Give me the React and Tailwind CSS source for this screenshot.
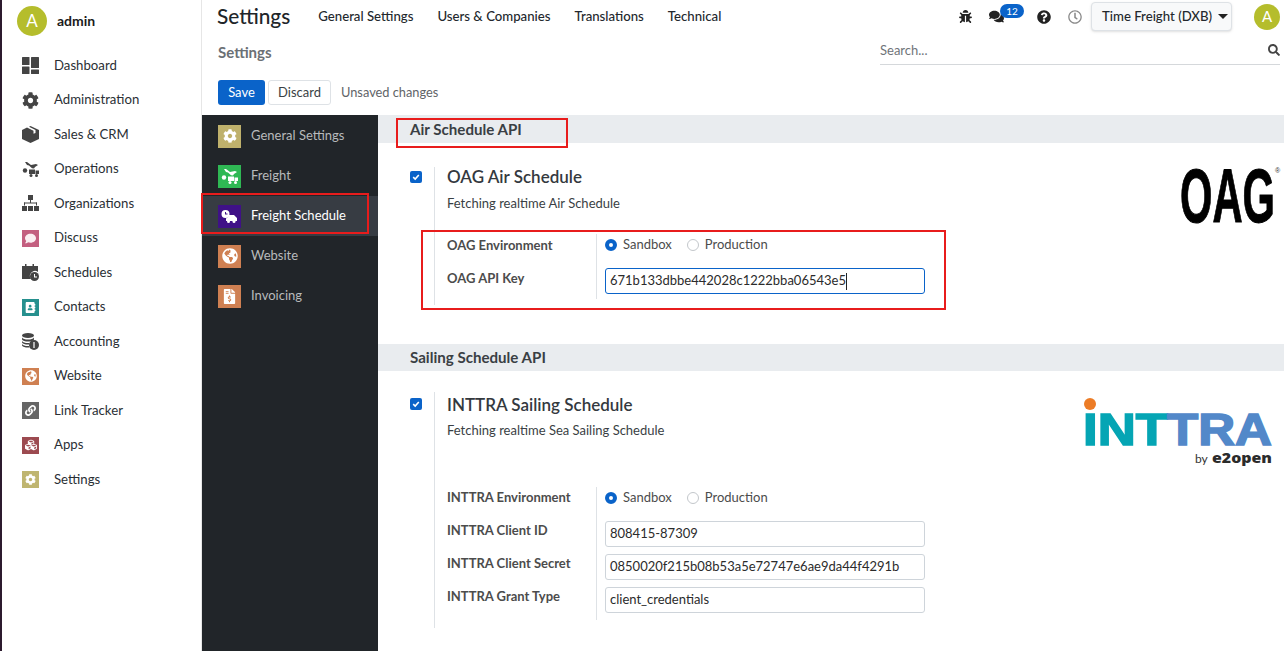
import {
  FaBug,
  FaComments,
  FaQuestionCircle,
  FaRegClock,
  FaSearch,
  FaCog,
  FaComment,
  FaAddressBook,
  FaGlobeAmericas,
  FaLink,
  FaCubes,
  FaFileInvoiceDollar,
} from "react-icons/fa";

const Tile = ({ bg, children }) => (
  <div className={`w-[17px] h-[17px] flex items-center justify-center shrink-0 ${bg}`}>{children}</div>
);

const menuIcons = {
  dashboard: (
    <svg width="17" height="17" viewBox="0 0 17 17" fill="#444">
      <rect x="0" y="0" width="7.500" height="8" rx="0.500" />
      <rect x="9" y="0" width="8" height="11" rx="0.500" />
      <rect x="0" y="9.500" width="7.500" height="7.500" rx="0.500" />
      <rect x="9" y="12.500" width="8" height="4.500" rx="0.500" />
    </svg>
  ),
  gear: <FaCog size={17} color="#444" />,
  box: (
    <svg width="17" height="17" viewBox="0 0 17 17" fill="#444">
      <path d="M8.500 0 17 4v9l-8.500 4L0 13V4l5-2.400 6.500 3.200v3l2-.9V4L7 .8z" />
    </svg>
  ),
  ops: (
    <svg width="17" height="17" viewBox="0 0 17 17" fill="#444">
      <path d="M3 1h2l4 3 5-1 2 1-3 2-1 1.500-2-.2L7 4.500 5 4z" />
      <circle cx="3" cy="9.500" r="2.200" />
      <path d="M7 8.500h6V13H7zM13.500 9.500H17V13h-3.500z" />
      <circle cx="9" cy="14.500" r="1.500" />
      <circle cx="14.500" cy="14.500" r="1.500" />
    </svg>
  ),
  org: (
    <svg width="17" height="17" viewBox="0 0 17 17" fill="#444">
      <rect x="6" y="0" width="5" height="5" />
      <rect x="8" y="5" width="1" height="3" />
      <rect x="2" y="7.500" width="13" height="1" />
      <rect x="2" y="7.500" width="1" height="3" />
      <rect x="14" y="7.500" width="1" height="3" />
      <rect x="0" y="11" width="5" height="5" />
      <rect x="6" y="11" width="5" height="5" />
      <rect x="12" y="11" width="5" height="5" />
    </svg>
  ),
  discuss: (
    <Tile bg="bg-[#c45f80]">
      <FaComment size={11} color="#fbeef2" />
    </Tile>
  ),
  schedules: (
    <svg width="17" height="17" viewBox="0 0 17 17" fill="#444">
      <path d="M0 2h3V0h1.500v2h6V0H12v2h4v6a5 5 0 0 0-7 7H0z" />
      <circle cx="12.500" cy="12.500" r="4.500" />
      <path d="M12 10h1v2.500h2v1h-3z" fill="#fff" />
    </svg>
  ),
  contacts: (
    <Tile bg="bg-[#26908e]">
      <FaAddressBook size={11} color="#fff" />
    </Tile>
  ),
  accounting: (
    <svg width="17" height="17" viewBox="0 0 17 17" fill="#444">
      <ellipse cx="6" cy="2.500" rx="6" ry="2.500" />
      <path d="M0 4.500c1 1.500 3 2 6 2s5-.5 6-2v2c-1 1.500-3 2-6 2s-5-.5-6-2zM0 8c1 1.500 3 2 6 2h1.500L7 11.500H6c-3 0-5-.5-6-2zM0 11c1 1.500 3 2 6 2h1l.5 1.500H6c-3 0-5-.5-6-2z" />
      <circle cx="12" cy="12" r="5" />
      <rect x="11.400" y="9" width="1.200" height="6" fill="#fff" />
    </svg>
  ),
  website: (
    <Tile bg="bg-[#cf8052]">
      <FaGlobeAmericas size={12} color="#fff" />
    </Tile>
  ),
  link: (
    <Tile bg="bg-[#656565]">
      <FaLink size={11} color="#fff" />
    </Tile>
  ),
  apps: (
    <Tile bg="bg-[#9c4a50]">
      <FaCubes size={12} color="#fff" />
    </Tile>
  ),
  settings: (
    <Tile bg="bg-[#bfb570]">
      <FaCog size={11} color="#fff" />
    </Tile>
  ),
};

const menu = [
  ["Dashboard", "dashboard"],
  ["Administration", "gear"],
  ["Sales & CRM", "box"],
  ["Operations", "ops"],
  ["Organizations", "org"],
  ["Discuss", "discuss"],
  ["Schedules", "schedules"],
  ["Contacts", "contacts"],
  ["Accounting", "accounting"],
  ["Website", "website"],
  ["Link Tracker", "link"],
  ["Apps", "apps"],
  ["Settings", "settings"],
];

const AppTile = ({ bg, children }) => (
  <div className={`w-[23px] h-[23px] flex items-center justify-center shrink-0 ${bg}`}>{children}</div>
);

const settingsMenu = [
  {
    label: "General Settings",
    icon: (
      <AppTile bg="bg-[#bfb16c]">
        <FaCog size={14} color="#fff" />
      </AppTile>
    ),
  },
  {
    label: "Freight",
    icon: (
      <AppTile bg="bg-[#2fb854]">
        <svg width="17" height="17" viewBox="0 0 17 17" fill="#fff">
          <path d="M3 1h2l4 3 5-1 2 1-3 2-1 1.500-2-.2L7 4.500 5 4z" />
          <circle cx="3" cy="9.500" r="2.200" />
          <path d="M7 8.500h6V13H7zM13.500 9.500H17V13h-3.500z" />
          <circle cx="9" cy="14.500" r="1.500" />
          <circle cx="14.500" cy="14.500" r="1.500" />
        </svg>
      </AppTile>
    ),
  },
  {
    label: "Freight Schedule",
    active: true,
    icon: (
      <AppTile bg="bg-[#3f1187]">
        <svg width="17" height="17" viewBox="0 0 17 17" fill="#fff">
          <path
            fillRule="evenodd"
            d="M4.500 2a4 4 0 1 1 0 8 4 4 0 0 1 0-8zM4 4v2.500h2.500v-1H5V4z"
          />
          <path d="M8 7h5l3 3v3H5v-2.500A5 5 0 0 0 8 7z" />
          <circle cx="7.500" cy="13.500" r="1.500" />
          <circle cx="13" cy="13.500" r="1.500" />
        </svg>
      </AppTile>
    ),
  },
  {
    label: "Website",
    icon: (
      <AppTile bg="bg-[#cf8052]">
        <FaGlobeAmericas size={16} color="#fff" />
      </AppTile>
    ),
  },
  {
    label: "Invoicing",
    icon: (
      <AppTile bg="bg-[#cf8052]">
        <FaFileInvoiceDollar size={15} color="#fff" />
      </AppTile>
    ),
  },
];

const Checkbox = () => (
  <div className="w-3 h-3 rounded-[2px] bg-[#0a63c9] flex items-center justify-center shrink-0">
    <svg width="8" height="8" viewBox="0 0 8 8" fill="none" stroke="#fff" strokeWidth="1.600">
      <path d="M1.200 4.200 3.200 6 6.800 2" />
    </svg>
  </div>
);

const Radios = () => (
  <div className="flex items-center h-[20px] mt-px text-[13px] text-[#4c4c4c]">
    <span className="w-3 h-3 rounded-full border-[4px] border-[#0a63c9] bg-white mr-[6px]" />
    <span>Sandbox</span>
    <span className="w-3 h-3 rounded-full border border-[#c3c7cb] bg-white ml-[15px] mr-[6px]" />
    <span>Production</span>
  </div>
);

const TextBox = ({ value, focused }) => (
  <div
    className={`w-[320px] h-[26px] rounded-[3px] border bg-white px-[4px] flex items-center text-[13px] text-[#2b2b2b] ${
      focused ? "border-[#0a63c9]" : "border-[#ced4da]"
    }`}
  >
    {value}
    {focused && <span className="w-px h-[17px] bg-[#222]" />}
  </div>
);

const SectionBar = ({ children, className = "h-[27px]" }) => (
  <div className={`bg-[#e9ecef] pl-[32px] flex items-center text-[15.100px] font-bold text-[#3a3f44] ${className}`}>
    {children}
  </div>
);

const Annotation = ({ className }) => (
  <div className={`absolute border-2 border-[#e81c1c] pointer-events-none ${className}`} />
);

const OagLogo = () => (
  <svg width="104" height="64" viewBox="0 0 104 64" className="absolute left-[800px] top-[21px]">
    <text
      x="2"
      y="58"
      textLength="95"
      lengthAdjust="spacingAndGlyphs"
      fontFamily="'Liberation Sans', sans-serif"
      fontWeight="700"
      fontSize="76"
      fill="#000"
      stroke="#000"
      strokeWidth="1"
    >
      OAG
    </text>
    <text x="97" y="9" fontSize="7" fontFamily="'Liberation Sans', sans-serif" fill="#333">
      ®
    </text>
  </svg>
);

const InttraLogo = () => (
  <svg width="200" height="70" viewBox="0 0 200 70" className="absolute left-[704px] top-[26px]">
    <circle cx="8" cy="7" r="6" fill="#ec7c26" />
    <text
      x="1"
      y="48"
      textLength="85"
      lengthAdjust="spacingAndGlyphs"
      fontFamily="'Liberation Sans', sans-serif"
      fontWeight="700"
      fontSize="44"
      fill="#05a5b4"
      stroke="#05a5b4"
      strokeWidth="1.500"
    >
      INT
    </text>
    <text
      x="85"
      y="48"
      textLength="105"
      lengthAdjust="spacingAndGlyphs"
      fontFamily="'Liberation Sans', sans-serif"
      fontWeight="700"
      fontSize="44"
      fill="#5288c9"
      stroke="#5288c9"
      strokeWidth="1.500"
    >
      TRA
    </text>
    <text x="113" y="66" fontSize="12" fontFamily="Lato, sans-serif" fill="#333">
      by
    </text>
    <text
      x="130"
      y="66"
      fontSize="14"
      fontWeight="800"
      textLength="60"
      lengthAdjust="spacingAndGlyphs"
      fontFamily="'Open Sans', sans-serif"
      fill="#2b2b2b"
    >
      e2open
    </text>
  </svg>
);

const Label = ({ children }) => (
  <div className="h-[33px] flex items-start text-[13px] font-bold text-[#4c4c4c]">{children}</div>
);

export default function App() {
  return (
    <div className="relative w-[1284px] h-[651px] overflow-hidden flex bg-white font-['Lato',sans-serif] text-[#212529]">
      <div className="w-[2px] bg-[#2c1a2e] shrink-0" />

      {/* app sidebar */}
      <aside className="w-[200px] shrink-0 border-r border-[#e6e6e6] bg-white">
        <div className="flex items-start pl-[15px] pt-[6px] h-[48.500px]">
          <div className="w-[30px] h-[30px] rounded-full bg-[#b5bd2c] text-white flex items-center justify-center text-[17px]">
            A
          </div>
          <span className="ml-[10px] leading-[30px] text-[14px] font-bold text-[#1b1b1b]">admin</span>
        </div>
        <nav>
          {menu.map(([label, icon]) => (
            <div key={label} className="h-[34.500px] flex items-center pl-[20px] text-[13.200px] text-[#2a2f35]">
              <span className="w-[17px] h-[17px] flex items-center justify-center shrink-0">{menuIcons[icon]}</span>
              <span className="ml-[15px]">{label}</span>
            </div>
          ))}
        </nav>
      </aside>

      <main className="flex-1 flex flex-col min-w-0">
        {/* top bar */}
        <header className="h-[115px] shrink-0 pl-[15px] pr-[4px]">
          <div className="h-[33px] flex items-center">
            <span className="text-[20.800px] font-medium text-[#212529] leading-none">Settings</span>
            <div className="ml-[28px] flex gap-[24px] text-[13.200px] font-medium text-[#23282d]">
              <span>General Settings</span>
              <span>Users &amp; Companies</span>
              <span>Translations</span>
              <span>Technical</span>
            </div>
            <div className="ml-auto flex items-center text-[#222]">
              <FaBug size={13} />
              <span className="relative ml-[17px] w-[15px]">
                <FaComments size={15} />
                <span className="absolute -top-[5px] left-[11px] w-[24px] h-[14px] rounded-full bg-[#0a63c9] text-white text-[10px] flex items-center justify-center">
                  12
                </span>
              </span>
              <span className="ml-[33px]">
                <FaQuestionCircle size={14} />
              </span>
              <span className="ml-[17px] text-[#8a8a8a]">
                <FaRegClock size={14} />
              </span>
              <div className="ml-[9px] h-[29px] w-[141px] rounded-[4px] border border-[#dee2e6] bg-[#f8f9fa] shadow-sm flex items-center justify-between pl-[10px] pr-[3px] text-[13.200px] font-medium text-[#23282d]">
                <span>Time Freight (DXB)</span>
                <span className="w-0 h-0 border-x-[5px] border-x-transparent border-t-[5px] border-t-[#222]" />
              </div>
              <div className="ml-[22px] w-[26px] h-[26px] rounded-full bg-[#b5bd2c] text-white flex items-center justify-center text-[15px]">
                A
              </div>
            </div>
          </div>
          <div className="flex items-start h-[47px] pt-[8px] ml-px">
            <span className="text-[15px] font-bold text-[#6b7075]">Settings</span>
            <div className="ml-auto w-[400px] h-[24px] border-b border-[#d5d8db] flex items-start justify-between text-[13px] text-[#6f7479]">
              <span className="leading-[19px]">Search...</span>
              <FaSearch size={12} className="text-[#444] mt-[3px]" />
            </div>
          </div>
          <div className="flex items-center ml-px">
            <button className="h-[25px] w-[47px] rounded-[3px] bg-[#0a63c9] text-white text-[13px]">Save</button>
            <button className="ml-[3px] h-[25px] w-[63px] rounded-[3px] border border-[#dee2e6] bg-white text-[13px] text-[#3a3f44]">
              Discard
            </button>
            <span className="ml-[10px] text-[12.800px] text-[#5f6468]">Unsaved changes</span>
          </div>
        </header>

        <div className="flex-1 flex min-h-0">
          {/* settings tabs */}
          <div className="w-[176px] shrink-0 bg-[#212529] pt-px">
            {settingsMenu.map((item) => (
              <div
                key={item.label}
                className={`h-[40px] flex items-center pl-[16px] text-[13px] ${
                  item.active ? "bg-[#373c43] text-white" : "text-[#b8babc]"
                }`}
              >
                {item.icon}
                <span className="ml-[10px]">{item.label}</span>
              </div>
            ))}
          </div>

          {/* settings content */}
          <div className="flex-1 min-w-0 relative">
            <SectionBar className="h-[28px]">Air Schedule API</SectionBar>
            <div className="relative h-[201px] pt-[24px] pl-[32px] flex items-start">
              <div className="pt-[4px]">
                <Checkbox />
              </div>
              <div className="ml-[12px] h-[138px] border-l border-[#dee2e6] pl-[12px]">
                <div className="text-[17px] font-semibold leading-[20px] text-[#34393e]">OAG Air Schedule</div>
                <div className="mt-[7px] text-[13px] leading-[18px] text-[#3a3f44]">Fetching realtime Air Schedule</div>
                <div className="mt-[22px] flex">
                  <div className="w-[149px] pt-[2px]">
                    <Label>OAG Environment</Label>
                    <Label>OAG API Key</Label>
                  </div>
                  <div className="border-l border-[#dee2e6] pl-[8px] h-[65px]">
                    <Radios />
                    <div className="mt-[13px]">
                      <TextBox value="671b133dbbe442028c1222bba06543e5" focused />
                    </div>
                  </div>
                </div>
              </div>
              <OagLogo />
            </div>

            <SectionBar>Sailing Schedule API</SectionBar>
            <div className="relative pt-[21px] pl-[32px] flex items-start">
              <div className="pt-[6px]">
                <Checkbox />
              </div>
              <div className="ml-[12px] h-[236px] border-l border-[#dee2e6] pl-[12px]">
                <div className="text-[17px] font-semibold leading-[20px] mt-[3px] text-[#34393e]">
                  INTTRA Sailing Schedule
                </div>
                <div className="mt-[6px] text-[13px] leading-[18px] text-[#3a3f44]">
                  Fetching realtime Sea Sailing Schedule
                </div>
                <div className="mt-[48px] flex">
                  <div className="w-[149px] pt-px">
                    <Label>INTTRA Environment</Label>
                    <Label>INTTRA Client ID</Label>
                    <Label>INTTRA Client Secret</Label>
                    <Label>INTTRA Grant Type</Label>
                  </div>
                  <div className="border-l border-[#dee2e6] pl-[8px] h-[133px]">
                    <Radios />
                    <div className="mt-[13px] flex flex-col gap-[7px]">
                      <TextBox value="808415-87309" />
                      <TextBox value="0850020f215b08b53a5e72747e6ae9da44f4291b" />
                      <TextBox value="client_credentials" />
                    </div>
                  </div>
                </div>
              </div>
              <InttraLogo />
            </div>
          </div>
        </div>
      </main>

      <Annotation className="left-[201px] top-[193px] w-[168px] h-[41px]" />
      <Annotation className="left-[396px] top-[118px] w-[172px] h-[30px]" />
      <Annotation className="left-[421px] top-[230px] w-[525px] h-[80px]" />
    </div>
  );
}
